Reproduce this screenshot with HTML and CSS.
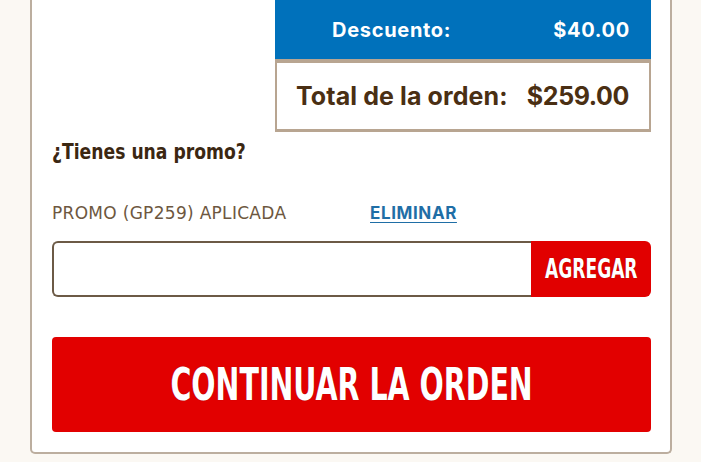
FILE: index.html
```html
<!DOCTYPE html>
<html lang="es">
<head>
<meta charset="utf-8">
<link rel="stylesheet" href="styles.css">
</head>
<body>
<div class="card">
  <div class="summary">
    <div class="row discount">
      <span class="label">Descuento:</span>
      <span class="value">$40.00</span>
    </div>
    <div class="row total">
      <span class="label">Total de la orden:</span>
      <span class="value">$259.00</span>
    </div>
  </div>
  <h2 class="promo-title"><span class="title-text">¿Tienes una promo?</span></h2>
  <div class="promo-applied">
    <span class="promo-code">PROMO (GP259) APLICADA</span>
    <a class="remove" href="#">ELIMINAR</a>
  </div>
  <div class="promo-form">
    <input class="promo-input" type="text" aria-label="Código promo">
    <button class="add-btn"><span class="squeeze">AGREGAR</span></button>
  </div>
  <button class="continue-btn"><span class="squeeze">CONTINUAR LA ORDEN</span></button>
</div>
</body>
</html>
```
FILE: styles.css
```css
* { box-sizing: border-box; }
html, body { margin: 0; padding: 0; }
body {
  background: #fbf8f3;
  width: 701px;
  height: 462px;
  overflow: hidden;
  font-family: "Open Sans", "Liberation Sans", sans-serif;
}
.card {
  margin-left: 30px;
  width: 642px;
  background: #fff;
  border: 2px solid #bcae9f;
  border-top: none;
  border-radius: 0 0 5px 5px;
  padding: 0 19px 20px 20px;
  display: flex;
  flex-direction: column;
}
.summary {
  align-self: flex-end;
  width: 376px;
}
.row {
  display: flex;
  justify-content: space-between;
  align-items: center;
  font-family: "Inter", "Open Sans", sans-serif;
  font-weight: 700;
}
.discount {
  background: #0071bb;
  color: #fff;
  height: 59px;
  padding: 0 21px 0 57px;
  font-size: 20px;
  letter-spacing: 0.7px;
}
.total {
  height: 73px;
  border: 2px solid #b8a591;
  border-top-width: 4px;
  border-bottom-width: 3px;
  padding: 0 20px 0 19px;
  color: #4a2f13;
  font-size: 25px;
  letter-spacing: 0.1px;
}
.total .value { letter-spacing: -0.4px; }
.promo-title {
  margin: 6px 0 0;
  font-weight: 700;
  font-size: 21px;
  line-height: 26px;
  color: #3b2712;
}
.title-text {
  display: inline-block;
  font-family: "DejaVu Sans Condensed", "DejaVu Sans", sans-serif;
  font-stretch: condensed;
  transform: scaleX(0.91);
  transform-origin: left center;
  white-space: nowrap;
}
.promo-applied {
  margin-top: 37px;
  display: flex;
  align-items: center;
  height: 22px;
}
.promo-code {
  width: 318px;
  font-family: "DejaVu Sans", sans-serif;
  font-size: 17px;
  letter-spacing: 0.3px;
  color: #6d5740;
  white-space: nowrap;
}
.remove {
  font-family: "Inter", "Open Sans", sans-serif;
  font-weight: 700;
  font-size: 17px;
  letter-spacing: 0.6px;
  color: #1f6ea6;
  text-decoration: underline;
  text-underline-offset: 3px;
}
.promo-form {
  margin-top: 17px;
  display: flex;
  height: 56px;
}
.promo-input {
  flex: 1;
  margin: 0;
  border: 2px solid #6c5a46;
  border-right: none;
  border-radius: 6px 0 0 6px;
  background: #fff;
  outline: none;
}
.add-btn {
  width: 120px;
  margin: 0;
  border: none;
  border-radius: 0 6px 6px 0;
  background: #e10000;
  color: #fff;
  display: flex;
  align-items: center;
  justify-content: center;
  padding: 0;
}
.squeeze {
  display: inline-block;
  font-family: "DejaVu Sans Condensed", "DejaVu Sans", sans-serif;
  font-stretch: condensed;
  font-weight: 700;
  white-space: nowrap;
  text-shadow: 0 0 1px #8c0000;
}
.add-btn .squeeze {
  font-size: 26px;
  transform: scaleX(0.73);
}
.continue-btn {
  margin-top: 40px;
  height: 95px;
  border: none;
  border-radius: 4px;
  background: #e20000;
  color: #fff;
  display: flex;
  align-items: center;
  justify-content: center;
  padding: 0;
}
.continue-btn .squeeze {
  font-size: 44px;
  transform: scaleX(0.72);
}
```
